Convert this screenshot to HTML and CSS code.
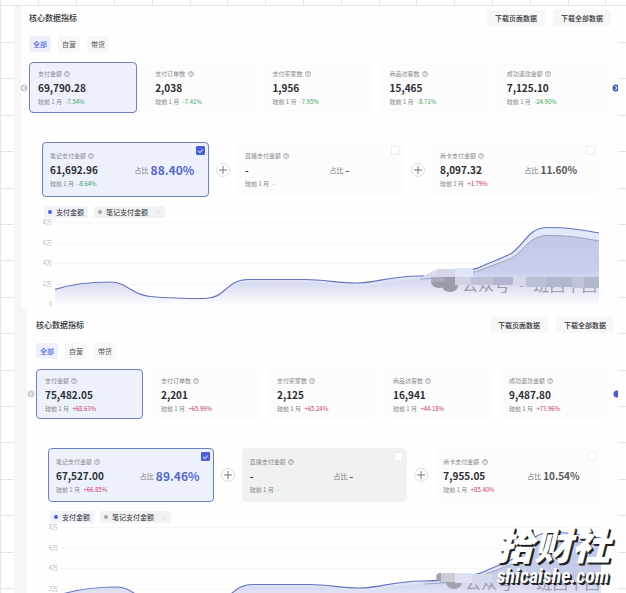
FILE: index.html
```
<!DOCTYPE html>
<html lang="zh-CN">
<head>
<meta charset="utf-8">
<title>核心数据指标</title>
<link rel="stylesheet" href="styles.css">
</head>
<body>
<svg class="defs" width="0" height="0" aria-hidden="true">
  <defs>
    <linearGradient id="fillBlue" x1="0" y1="0" x2="0" y2="1">
      <stop offset="0" stop-color="#e3e8fb"/><stop offset="0.7" stop-color="#dfe3f6"/><stop offset="1" stop-color="#fdfdff"/>
    </linearGradient>
    <linearGradient id="fillGrey" x1="0" y1="0" x2="0" y2="1">
      <stop offset="0" stop-color="#c3c8e6"/><stop offset="0.5" stop-color="#c8cdeb"/><stop offset="0.75" stop-color="#dfe2f4"/><stop offset="1" stop-color="#fdfdff"/>
    </linearGradient>
    <symbol id="help" viewBox="0 0 12 12">
      <circle cx="6" cy="6" r="5" fill="none" stroke="currentColor" stroke-width="1.300"/>
      <path d="M4.500 4.800a1.500 1.500 0 1 1 2.200 1.300c-.5.3-.7.5-.7 1.100M6 8.200v.9" fill="none" stroke="currentColor" stroke-width="1.300"/>
    </symbol>
    <symbol id="plus" viewBox="0 0 14 14">
      <circle cx="7" cy="7" r="6.400" fill="#fff" stroke="#dcdcdc"/>
      <path d="M7 3v8M3 7h8" stroke="#777" fill="none"/>
    </symbol>
    <symbol id="trend" viewBox="0 0 544 83" preserveAspectRatio="none">
      <path d="M0 .5H544M0 21.500H544M0 41.500H544M0 62.500H544" stroke="#f4f6f7" fill="none"/>
      <path d="M0 67.500C14 63 32 60 56 60C72 60 76 73 95 74.500C112 76 125 76.500 150 76.500C170 76.500 172 57.500 193 57.500H250C270 57.500 282 61 301 61C323 61 330 54.500 365 54C395 53.500 408 50 423 46C438 39 448 36 457 31C471 20 474 5.500 493 5.500C512 5.500 522 7 544 11V83H0Z" fill="url(#fillBlue)"/>
      <path d="M0 69C14 64 32 61 56 61C72 61 76 74 95 75.500C112 77 125 77.500 150 77.500C170 77.500 172 60 193 60H250C270 60 282 63.500 301 63.500C323 63.500 330 58 365 57C395 56 408 53 423 49C438 43 448 40 457 36C471 27 474 13.500 493 13.500C512 13.500 522 15 544 19V83H0Z" fill="url(#fillGrey)"/>
      <path d="M365 57C395 56 408 53 423 49C438 43 448 40 457 36C471 27 474 13.500 493 13.500C512 13.500 522 15 544 19" fill="none" stroke="#9da2bd"/>
      <path d="M0 67.500C14 63 32 60 56 60C72 60 76 73 95 74.500C112 76 125 76.500 150 76.500C170 76.500 172 57.500 193 57.500H250C270 57.500 282 61 301 61C323 61 330 54.500 365 54C395 53.500 408 50 423 46C438 39 448 36 457 31C471 20 474 5.500 493 5.500C512 5.500 522 7 544 11" fill="none" stroke="#6573c3" stroke-width="1.200"/>
    </symbol>
  </defs>
</svg>

<div class="page">
  <svg class="backdrop" aria-hidden="true">
    <path d="M.5 0V593M38.500 0V6M76.500 0V6M114.500 0V6M152.500 0V6M190.500 0V6M227.500 0V6M265.500 0V6M303.500 0V6M341.500 0V6M379.500 0V6M416.500 0V6M454.500 0V6M492.500 0V6M530.500 0V6M568.500 0V6M605.500 0V6M0 5.500H626M0 42.500H626M0 78.500H626M0 115.500H626M0 151.500H626M0 188.500H626M0 224.500H626M0 260.500H626M0 297.500H626M0 333.500H626M0 370.500H626M0 406.500H626M0 442.500H626M0 479.500H626M0 515.500H626M0 552.500H626M0 588.500H626" stroke="#e6e6e6" fill="none"/>
  </svg>
  <main class="sheet">

    <section class="panel first">
      <header class="head">
        <h2>核心数据指标</h2>
        <div class="actions"><button type="button">下载页面数据</button><button type="button">下载全部数据</button></div>
      </header>
      <nav class="tabs"><button type="button" class="on">全部</button><button type="button">自营</button><button type="button">带货</button></nav>
      <div class="metrics">
        <button type="button" class="arrow prev" aria-label="上一页"><svg viewBox="0 0 8 8"><circle cx="4" cy="4" r="3.500" fill="#cfcfcf"/><path d="M4.800 2L3 4l1.800 2" stroke="#fff" fill="none"/></svg></button>
        <article class="card on"><p class="label">支付金额 <svg><use href="#help"/></svg></p><p class="value">69,790.28</p><p class="cmp">较前 1 月 <b class="down">-7.54%</b></p></article>
        <article class="card"><p class="label">支付订单数 <svg><use href="#help"/></svg></p><p class="value">2,038</p><p class="cmp">较前 1 月 <b class="down">-7.41%</b></p></article>
        <article class="card"><p class="label">支付买家数 <svg><use href="#help"/></svg></p><p class="value">1,956</p><p class="cmp">较前 1 月 <b class="down">-7.95%</b></p></article>
        <article class="card"><p class="label">商品访客数 <svg><use href="#help"/></svg></p><p class="value">15,465</p><p class="cmp">较前 1 月 <b class="down">-8.71%</b></p></article>
        <article class="card"><p class="label">成功退款金额 <svg><use href="#help"/></svg></p><p class="value">7,125.10</p><p class="cmp">较前 1 月 <b class="down">-24.90%</b></p></article>
        <button type="button" class="arrow next" aria-label="下一页"><svg viewBox="0 0 8 8"><circle cx="4" cy="4" r="3.500" fill="#4a5bd4"/><path d="M3.200 2L5 4 3.200 6" stroke="#fff" fill="none"/></svg></button>
      </div>
      <div class="detail">
        <div class="parts">
          <article class="card part on"><input type="checkbox" aria-label="笔记支付金额" checked><p class="label">笔记支付金额 <svg><use href="#help"/></svg></p><div class="row"><p class="value">61,692.96</p><p class="share">占比 <b>88.40%</b></p></div><p class="cmp">较前 1 月 <b class="down">-8.64%</b></p></article>
          <svg class="plus"><use href="#plus"/></svg>
          <article class="card part"><input type="checkbox" aria-label="直播支付金额"><p class="label">直播支付金额 <svg><use href="#help"/></svg></p><div class="row"><p class="value">-</p><p class="share">占比 <b>-</b></p></div><p class="cmp">较前 1 月 <b>-</b></p></article>
          <svg class="plus"><use href="#plus"/></svg>
          <article class="card part"><input type="checkbox" aria-label="商卡支付金额"><p class="label">商卡支付金额 <svg><use href="#help"/></svg></p><div class="row"><p class="value">8,097.32</p><p class="share">占比 <b>11.60%</b></p></div><p class="cmp">较前 1 月 <b class="up">+1.79%</b></p></article>
        </div>
        <ul class="legend"><li class="blue">支付金额</li><li class="grey">笔记支付金额<span>×</span></li></ul>
        <div class="chart">
          <div class="axis"><span>8万</span><span>6万</span><span>4万</span><span>2万</span><span>0</span></div>
          <svg class="plot"><use href="#trend"/></svg>
          <svg class="mosaic" viewBox="0 0 176 32">
            <g fill="#999ba8"><ellipse cx="16" cy="14" rx="8" ry="6"/><ellipse cx="27" cy="18" rx="8" ry="6"/></g>
            <text x="39" y="23">公众号 · 班西十西</text>
            <path d="M0 8L12 2H30V10H0Z" fill="#d9dcf0"/>
            <path d="M14 1h18v9H14z" fill="#d3d7e8"/><path d="M32 0h18v10H32z" fill="#e0e4f5"/>
            <path d="M8 9h13v5H8z" fill="#a9acba"/><path d="M21 9h11v8H21z" fill="#9a9ca8"/>
            <path d="M32 9h16v8H32z" fill="#cfd2e1"/><path d="M48 9h22v8H48z" fill="#bfc3d8"/><path d="M70 9h20v8H70z" fill="#b2b6cd"/><path d="M90 9h13v9H90z" fill="#d5d8e8"/><path d="M103 9h20v10h-20z" fill="#bcc0d5"/><path d="M123 9h26v10h-26z" fill="#b3b7cd"/><path d="M149 9h12v11h-12z" fill="#c1c4d7"/><path d="M161 9h15v11h-15z" fill="#b3b7cd"/>
          </svg>
        </div>
      </div>
    </section>

    <section class="panel second">
      <header class="head">
        <h2>核心数据指标</h2>
        <div class="actions"><button type="button">下载页面数据</button><button type="button">下载全部数据</button></div>
      </header>
      <nav class="tabs"><button type="button" class="on">全部</button><button type="button">自营</button><button type="button">带货</button></nav>
      <div class="metrics">
        <button type="button" class="arrow prev" aria-label="上一页"><svg viewBox="0 0 8 8"><circle cx="4" cy="4" r="3.500" fill="#cfcfcf"/><path d="M4.800 2L3 4l1.800 2" stroke="#fff" fill="none"/></svg></button>
        <article class="card on"><p class="label">支付金额 <svg><use href="#help"/></svg></p><p class="value">75,482.05</p><p class="cmp">较前 1 月 <b class="up">+68.63%</b></p></article>
        <article class="card"><p class="label">支付订单数 <svg><use href="#help"/></svg></p><p class="value">2,201</p><p class="cmp">较前 1 月 <b class="up">+65.99%</b></p></article>
        <article class="card"><p class="label">支付买家数 <svg><use href="#help"/></svg></p><p class="value">2,125</p><p class="cmp">较前 1 月 <b class="up">+65.24%</b></p></article>
        <article class="card"><p class="label">商品访客数 <svg><use href="#help"/></svg></p><p class="value">16,941</p><p class="cmp">较前 1 月 <b class="up">+44.18%</b></p></article>
        <article class="card"><p class="label">成功退款金额 <svg><use href="#help"/></svg></p><p class="value">9,487.80</p><p class="cmp">较前 1 月 <b class="up">+73.96%</b></p></article>
        <button type="button" class="arrow next" aria-label="下一页"><svg viewBox="0 0 8 8"><circle cx="4" cy="4" r="3.500" fill="#4a5bd4"/></svg></button>
      </div>
      <div class="detail">
        <div class="parts">
          <article class="card part on"><input type="checkbox" aria-label="笔记支付金额" checked><p class="label">笔记支付金额 <svg><use href="#help"/></svg></p><div class="row"><p class="value">67,527.00</p><p class="share">占比 <b>89.46%</b></p></div><p class="cmp">较前 1 月 <b class="up">+66.85%</b></p></article>
          <svg class="plus"><use href="#plus"/></svg>
          <article class="card part muted"><input type="checkbox" aria-label="直播支付金额"><p class="label">直播支付金额 <svg><use href="#help"/></svg></p><div class="row"><p class="value">-</p><p class="share">占比 <b>-</b></p></div><p class="cmp">较前 1 月 <b>-</b></p></article>
          <svg class="plus"><use href="#plus"/></svg>
          <article class="card part"><input type="checkbox" aria-label="商卡支付金额"><p class="label">商卡支付金额 <svg><use href="#help"/></svg></p><div class="row"><p class="value">7,955.05</p><p class="share">占比 <b>10.54%</b></p></div><p class="cmp">较前 1 月 <b class="up">+85.40%</b></p></article>
        </div>
        <ul class="legend"><li class="blue">支付金额</li><li class="grey">笔记支付金额<span>×</span></li></ul>
        <div class="chart">
          <div class="axis"><span>8万</span><span>6万</span><span>4万</span><span>2万</span><span>0</span></div>
          <svg class="plot"><use href="#trend"/></svg>
          <svg class="mosaic" viewBox="0 0 176 32">
            <g fill="#a2a3ac"><ellipse cx="21" cy="4" rx="10" ry="6"/><ellipse cx="29" cy="9" rx="8" ry="7"/></g>
            <text x="40" y="16">公众号 · 班西十西</text>
            <path d="M16 0h14v9H16z" fill="#c9cbd6"/><path d="M30 0h17v10H30z" fill="#dfe2f2"/><path d="M47 1h20v9H47z" fill="#d5d9ec"/><path d="M67 1h33v9H67z" fill="#ccd0e6"/><path d="M100 1h76v9h-76z" fill="#bfc4df"/>
          </svg>
        </div>
      </div>
    </section>
  </main>
  <div class="brand"><strong>拾财社</strong><span>shicaishe.com</span></div>
</div>
</body>
</html>
```
FILE: styles.css
```
* { box-sizing: border-box; margin: 0; padding: 0; }

body {
  font-family: "Noto Sans CJK SC", sans-serif;
  color: #2b2d33;
  background: #fff;
}

.defs { position: absolute; }

.page {
  position: relative;
  height: 100vh;
  overflow: hidden;
  padding: 6px 8px 0 14px;
}

.backdrop {
  position: absolute;
  inset: 0;
  width: 100%;
  height: 100%;
}

.sheet {
  position: relative;
  background: #f6f6f6;
  overflow: hidden;
}

.panel { background: #fefefe; }
.first { margin-left: 7px; padding: 4px 7px 0 8px; }
.second { margin-left: 13px; padding: 8px 4px 0 9px; }

button {
  font: inherit;
  border: 0;
  color: inherit;
  background: #f7f7f7;
  border-radius: 2px;
}

.head {
  display: flex;
  justify-content: space-between;
  align-items: center;
}

h2 { font-size: 8px; line-height: 16px; font-weight: 500; }

.actions { display: flex; gap: 8px; }
.actions button { height: 16px; padding: 0 8px; font-size: 7px; line-height: 16px; font-weight: 500; }

.tabs { display: flex; gap: 7px; margin: 10px 0; }
.tabs button { height: 16px; padding: 0 4px; font-size: 7px; line-height: 16px; color: #555; }
.tabs .on { color: #4c61e0; background: #eef1fd; font-weight: 500; }

.metrics {
  position: relative;
  display: grid;
  grid-template-columns: repeat(5, 1fr);
  gap: 9px;
}
.first .metrics { margin-right: 5px; }
.second .metrics { margin-right: 7px; }

.arrow {
  position: absolute;
  top: 50%;
  width: 8px;
  height: 8px;
  margin-top: -4px;
  background: none;
}
.arrow svg { display: block; width: 8px; height: 8px; }
.prev { left: -9px; }
.next { right: -14px; }

.card {
  position: relative;
  padding: 6px 8px;
  border: 1px solid #fcfcfc;
  border-radius: 4px;
  background: #fcfcfc;
}
.card.on { border-color: #6d80c8; background: #edf1fc; }
.first .card { height: 51px; }
.second .card { height: 50px; }

.label, .cmp { font-size: 6px; line-height: 10px; color: #85878c; white-space: nowrap; }
.label svg { width: 6px; height: 6px; margin-left: 1px; vertical-align: -1px; }
.value { font-size: 10px; line-height: 18px; font-weight: 700; }
.cmp b { font-weight: 400; margin-left: 2px; }
.cmp .down { color: #3ba35a; }
.cmp .up { color: #c83a66; }

.detail { margin-top: 9px; padding: 19px 7px 0 13px; border-top: 1px solid #fafafa; }
.first .detail { padding-right: 12px; }
.second .detail { padding: 19px 13px 0 12px; }

.parts { display: flex; align-items: center; }
.card.part { flex: 1; padding: 7px 7px; }
.first .part { height: 55px; }
.second .part { height: 54px; }
.card.muted { background: #f0f1f1; border-color: #f0f1f1; }
.part .value { flex: 0 0 56%; }
.part .label { line-height: 11px; }

.plus { flex: none; width: 14px; height: 14px; margin: 0 7px; }

.row { display: flex; align-items: center; }
.share { display: flex; align-items: center; gap: 2px; font-size: 7px; line-height: 18px; color: #777; }
.share b { font-size: 10px; font-weight: 700; color: #555; }
.on .share b { font-size: 12px; color: #5466cf; }

input[type="checkbox"] {
  position: absolute;
  top: 3px;
  right: 3px;
  width: 9px;
  height: 9px;
  appearance: none;
  border: 1px solid #ececec;
  border-radius: 1px;
  background: #fff;
}
input[type="checkbox"]:checked { border-color: #4a5ee0; background: #4a5ee0; }
input:checked::after {
  content: "";
  display: block;
  width: 4px;
  height: 2px;
  margin: 2px auto 0;
  border: solid #c9d0ff;
  border-width: 0 0 1px 1px;
  transform: rotate(-45deg);
}

.legend { display: flex; gap: 6px; list-style: none; margin: 9px 0 4px 2px; }
.legend li {
  display: flex;
  align-items: center;
  height: 12px;
  padding: 0 4px;
  font-size: 7px;
  border-radius: 2px;
  background: #f1f3fb;
}
.legend li::before { content: ""; width: 4px; height: 4px; margin-right: 4px; border-radius: 50%; background: #4a5ee0; }
.legend .grey { background: #f2f2f2; }
.legend .grey::before { background: #a5a5a5; }
.legend span { margin-left: 6px; color: #ddd; }

.chart { position: relative; display: flex; height: 87px; }
.axis {
  width: 13px;
  height: 92px;
  margin: -5px 0;
  display: flex;
  flex: none;
  flex-direction: column;
  justify-content: space-between;
  padding-right: 3px;
  text-align: right;
  white-space: nowrap;
  font-size: 6px;
  line-height: 10px;
  color: #b5b8bc;
}
.plot { flex: 1; min-width: 0; height: 83px; }
.mosaic { position: absolute; right: 0; top: 46px; width: 176px; height: 32px; }
.mosaic text { font-size: 16px; fill: #999ca9; }

.brand {
  position: absolute;
  right: 16px;
  bottom: 6px;
  display: flex;
  flex-direction: column;
  align-items: center;
  color: #fff;
  font-style: italic;
  text-shadow: 1px 1px 0 #222, 2px 2px 0 #222;
}
.brand strong { font-size: 38px; line-height: 42px; font-weight: 900; }
.brand span { font-family: "Roboto Condensed", "Liberation Sans Narrow", "Liberation Sans", sans-serif; font-size: 20px; line-height: 22px; font-weight: 700; }
```
